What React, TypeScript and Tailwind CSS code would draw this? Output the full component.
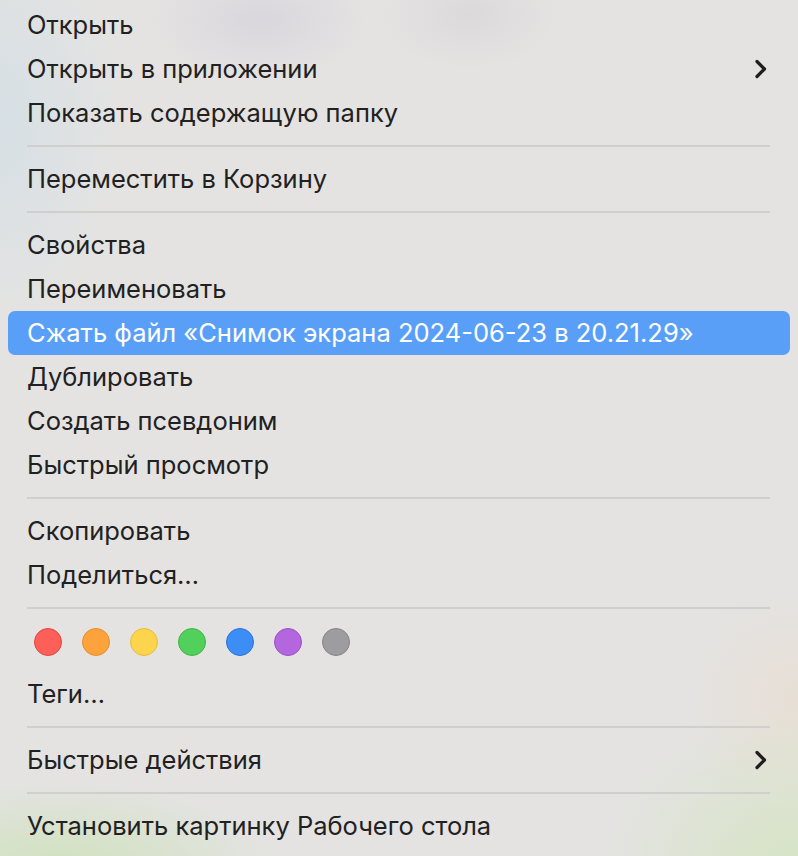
import React from "react";

const Chevron = () => (
  <svg width="14" height="20" viewBox="0 0 14 20" className="absolute right-[22px] top-1/2 -translate-y-1/2">
    <path d="M3 2.5 L10.5 10 L3 17.5" fill="none" stroke="#1f1f1f" strokeWidth="3.2" strokeLinecap="round" strokeLinejoin="round" />
  </svg>
);

const Item = ({ label, sub, active }: { label: string; sub?: boolean; active?: boolean }) => (
  <div
    className={
      "relative h-[44px] flex items-center pl-[19px] rounded-[7px] text-[25.5px] " +
      (active ? "bg-[#5a9ff7] text-white" : "text-[#212121]")
    }
  >
    <span>{label}</span>
    {sub && <Chevron />}
  </div>
);

const Sep = () => (
  <div className="h-[22px] flex items-center pl-[19px] pr-[20px]">
    <div className="h-[2px] w-full bg-[#d0cfce]" />
  </div>
);

const tags = [
  ["#fe5f58", "#e0443e"],
  ["#fea23c", "#e78d2a"],
  ["#fdd44e", "#e9bd35"],
  ["#51d15c", "#3bb446"],
  ["#3c8df6", "#2a73d9"],
  ["#b466de", "#9a4fc4"],
  ["#9d9d9f", "#858587"],
];

export default function App() {
  return (
    <div
      className="w-[798px] h-[856px] overflow-hidden px-[8px] pt-[3px] bg-[#e4e3e2] bg-[radial-gradient(ellipse_110px_60px_at_260px_20px,rgba(208,204,216,0.55),transparent),radial-gradient(ellipse_90px_55px_at_470px_15px,rgba(210,205,210,0.45),transparent),radial-gradient(ellipse_120px_200px_at_0px_120px,rgba(208,222,230,0.7),transparent),radial-gradient(ellipse_220px_90px_at_60px_870px,rgba(205,225,185,0.9),transparent),radial-gradient(ellipse_200px_160px_at_800px_870px,rgba(212,228,192,0.9),transparent),radial-gradient(ellipse_120px_120px_at_798px_700px,rgba(232,222,210,0.8),transparent)]"
      style={{ fontFamily: "Inter, 'Noto Sans', sans-serif" }}
    >
      <Item label="Открыть" />
      <Item label="Открыть в приложении" sub />
      <Item label="Показать содержащую папку" />
      <Sep />
      <Item label="Переместить в Корзину" />
      <Sep />
      <Item label="Свойства" />
      <Item label="Переименовать" />
      <Item label="Сжать файл «Снимок экрана 2024-06-23 в 20.21.29»" active />
      <Item label="Дублировать" />
      <Item label="Создать псевдоним" />
      <Item label="Быстрый просмотр" />
      <Sep />
      <Item label="Скопировать" />
      <Item label="Поделиться…" />
      <Sep />
      <div className="h-[53px] flex items-start pt-[9px] pl-[26px] gap-[20px]">
        {tags.map(([fill, border], i) => (
          <div
            key={i}
            className="w-[28px] h-[28px] rounded-full border-[1.5px]"
            style={{ backgroundColor: fill, borderColor: border }}
          />
        ))}
      </div>
      <Item label="Теги…" />
      <Sep />
      <Item label="Быстрые действия" sub />
      <Sep />
      <Item label="Установить картинку Рабочего стола" />
    </div>
  );
}
